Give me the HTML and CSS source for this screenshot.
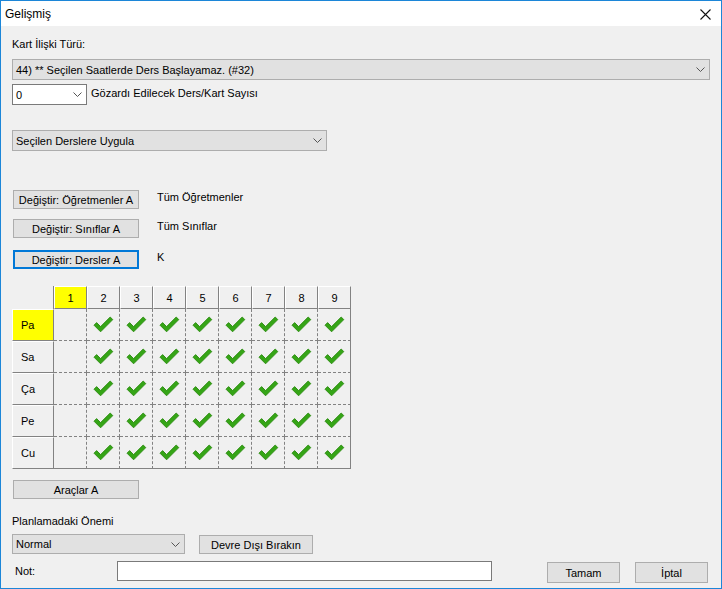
FILE: index.html
```html
<!DOCTYPE html>
<html>
<head>
    <meta charset="utf-8" />
    <title>Gelişmiş</title>
    <link rel="stylesheet" href="styles.css">
</head>
<body>
<div class="window">
    <div class="titlebar">
        <span class="title">Gelişmiş</span>
        <svg class="close" width="11" height="11" viewBox="0 0 11 11"><path d="M0.5 0.5L10.5 10.5M10.5 0.5L0.5 10.5" stroke="#111" stroke-width="1.1" fill="none"/></svg>
    </div>
    <div class="content">
        <div class="lbl lbl-top">Kart İlişki Türü:</div>
        <div class="combo combo-gray combo-wide">
            <span>44) ** Seçilen Saatlerde Ders Başlayamaz. (#32)</span>
            <svg class="chev" width="9" height="5" viewBox="0 0 9 5"><path d="M0.5 0.5L4.5 4.5L8.5 0.5" stroke="#555" fill="none"/></svg>
        </div>
        <div class="row row-skip">
            <div class="combo combo-white combo-num">
                <span>0</span>
                <svg class="chev" width="9" height="5" viewBox="0 0 9 5"><path d="M0.5 0.5L4.5 4.5L8.5 0.5" stroke="#555" fill="none"/></svg>
            </div>
            <span class="skip-text">Gözardı Edilecek Ders/Kart Sayısı</span>
        </div>
        <div class="combo combo-gray combo-apply">
            <span>Seçilen Derslere Uygula</span>
            <svg class="chev" width="9" height="5" viewBox="0 0 9 5"><path d="M0.5 0.5L4.5 4.5L8.5 0.5" stroke="#555" fill="none"/></svg>
        </div>

        <div class="row btn-row first">
            <button class="btn btn-change">Değiştir: Öğretmenler A</button>
            <span class="btn-note">Tüm Öğretmenler</span>
        </div>
        <div class="row btn-row second">
            <button class="btn btn-change">Değiştir: Sınıflar A</button>
            <span class="btn-note">Tüm Sınıflar</span>
        </div>
        <div class="row btn-row third">
            <button class="btn btn-change focused">Değiştir: Dersler A</button>
            <span class="btn-note">K</span>
        </div>

        <div class="grid" id="grid"></div>

        <button class="btn btn-tools">Araçlar A</button>

        <div class="lbl lbl-prio">Planlamadaki Önemi</div>
        <div class="row prio-row">
            <div class="combo combo-gray combo-prio">
                <span>Normal</span>
                <svg class="chev" width="9" height="5" viewBox="0 0 9 5"><path d="M0.5 0.5L4.5 4.5L8.5 0.5" stroke="#555" fill="none"/></svg>
            </div>
            <button class="btn btn-disable">Devre Dışı Bırakın</button>
        </div>
        <div class="row bottom-row">
            <span class="not-lbl">Not:</span>
            <div class="note-input"></div>
            <button class="btn btn-ok">Tamam</button>
            <button class="btn btn-cancel">İptal</button>
        </div>
    </div>
</div>
<script>
    let days = ['Pa', 'Sa', 'Ça', 'Pe', 'Cu']
    let grid = document.getElementById('grid')
    let check = '<svg width="21" height="17" viewBox="0 0 21 17"><path d="M1 9.2L3.6 6.6L7.6 10.6L17.2 1L19.8 3.6L7.6 15.8Z" fill="#35a516" stroke="#2b8a10" stroke-width="0.9" stroke-linejoin="round"/></svg>'

    function cell(cls, html) {
        let d = grid.appendChild(document.createElement('div'))
        d.className = cls
        d.innerHTML = html || ''
        return d
    }

    cell('corner')
    for (let c = 1; c <= 9; c++) {
        cell('col-head' + (c == 1 ? ' hl' : ''), c)
    }
    days.forEach((day, r) => {
        cell('row-head' + (r == 0 ? ' hl' : ''), day)
        for (let c = 1; c <= 9; c++) {
            let cls = 'slot'
            if (c == 9) cls += ' last-col'
            if (r == 4) cls += ' last-row'
            cell(cls, c == 1 ? '' : check)
        }
    })
</script>
</body>
</html>
```

FILE: styles.css
```css
* {margin: 0;padding: 0;box-sizing: border-box;}
body {font-family: "Liberation Sans", Arial, sans-serif;font-size: 11px;color: #000;background: #f0f0f0;}

.window {
    width: 722px;
    height: 589px;
    border: 1px solid #1c86d8;
    background: #f0f0f0;
    display: flex;
    flex-direction: column;
}
.titlebar {
    height: 25px;
    background: #fff;
    display: flex;
    align-items: center;
    justify-content: space-between;
    padding: 0 10px 0 4px;
}
.title {font-size: 12px;}
.close {display: block;margin-top: 2px;}

.content {padding: 0 11px;display: flex;flex-direction: column;align-items: flex-start;}
.row {display: flex;align-items: center;}
.lbl {height: 14px;line-height: 14px;}
.lbl-top {margin-top: 11px;}

.combo {
    height: 21px;
    display: flex;
    align-items: center;
    justify-content: space-between;
    padding: 0 4px 0 3px;
    border: 1px solid #adadad;
}
.combo-gray {background: #e1e1e1;}
.combo-white {background: #fff;border-color: #7a7a7a;}
.chev {display: block;}
.combo-wide {width: 698px;margin-top: 8px;}
.row-skip {margin-top: 4px;}
.combo-num {width: 75px;}
.skip-text {margin-left: 4px;margin-top: -3px;}
.combo-apply {width: 315px;margin-top: 25px;}

.btn {
    font-family: inherit;
    font-size: 11px;
    color: #000;
    background: #e1e1e1;
    border: 1px solid #adadad;
    height: 19px;
    padding: 0;
    white-space: nowrap;
    text-align: center;
}
.btn.focused {border: 2px solid #0078d7;}
.btn-row {align-items: flex-start;}
.btn-row.first {margin-top: 39px;}
.btn-row.second {margin-top: 10px;}
.btn-row.third {margin-top: 12px;}
.btn-change {width: 126px;margin-left: 1px;}
.btn-note {margin-left: 18px;margin-top: 1px;}

.grid {
    margin-top: 17px;
    display: grid;
    grid-template-columns: 42px repeat(9, 33px);
    grid-template-rows: 23px repeat(5, 32px);
    font-size: 11px;
}
.corner {border-right: 1px solid #828282;}
.col-head {
    border-top: 1px solid #fff;
    border-left: 1px solid #fff;
    border-right: 1px solid #828282;
    border-bottom: 1px solid #828282;
    display: flex;
    align-items: center;
    justify-content: center;
}
.row-head {
    border-top: 1px solid #fff;
    border-left: 1px solid #fff;
    border-right: 1px solid #828282;
    border-bottom: 1px solid #828282;
    display: flex;
    align-items: center;
    padding-left: 8px;
}
.hl {background: #ffff00;}
.slot {
    border-right: 1px dashed #828282;
    border-bottom: 1px dashed #828282;
    display: flex;
    align-items: center;
    justify-content: center;
}
.slot svg {display: block;}
.slot.last-col {border-right-style: solid;}
.slot.last-row {border-bottom-style: solid;}

.btn-tools {width: 126px;margin-left: 1px;margin-top: 11px;}
.lbl-prio {margin-top: 15px;}
.prio-row {margin-top: 6px;align-items: flex-start;}
.combo-prio {width: 173px;height: 20px;}
.btn-disable {width: 114px;margin-left: 14px;margin-top: 1px;}

.bottom-row {margin-top: 7px;align-items: flex-start;}
.not-lbl {width: 105px;padding-left: 3px;line-height: 20px;}
.note-input {width: 375px;height: 20px;background: #fff;border: 1px solid #7a7a7a;}
.btn-ok {width: 73px;height: 21px;margin-left: 55px;margin-top: 1px;}
.btn-cancel {width: 73px;height: 21px;margin-left: 15px;margin-top: 1px;}
```
